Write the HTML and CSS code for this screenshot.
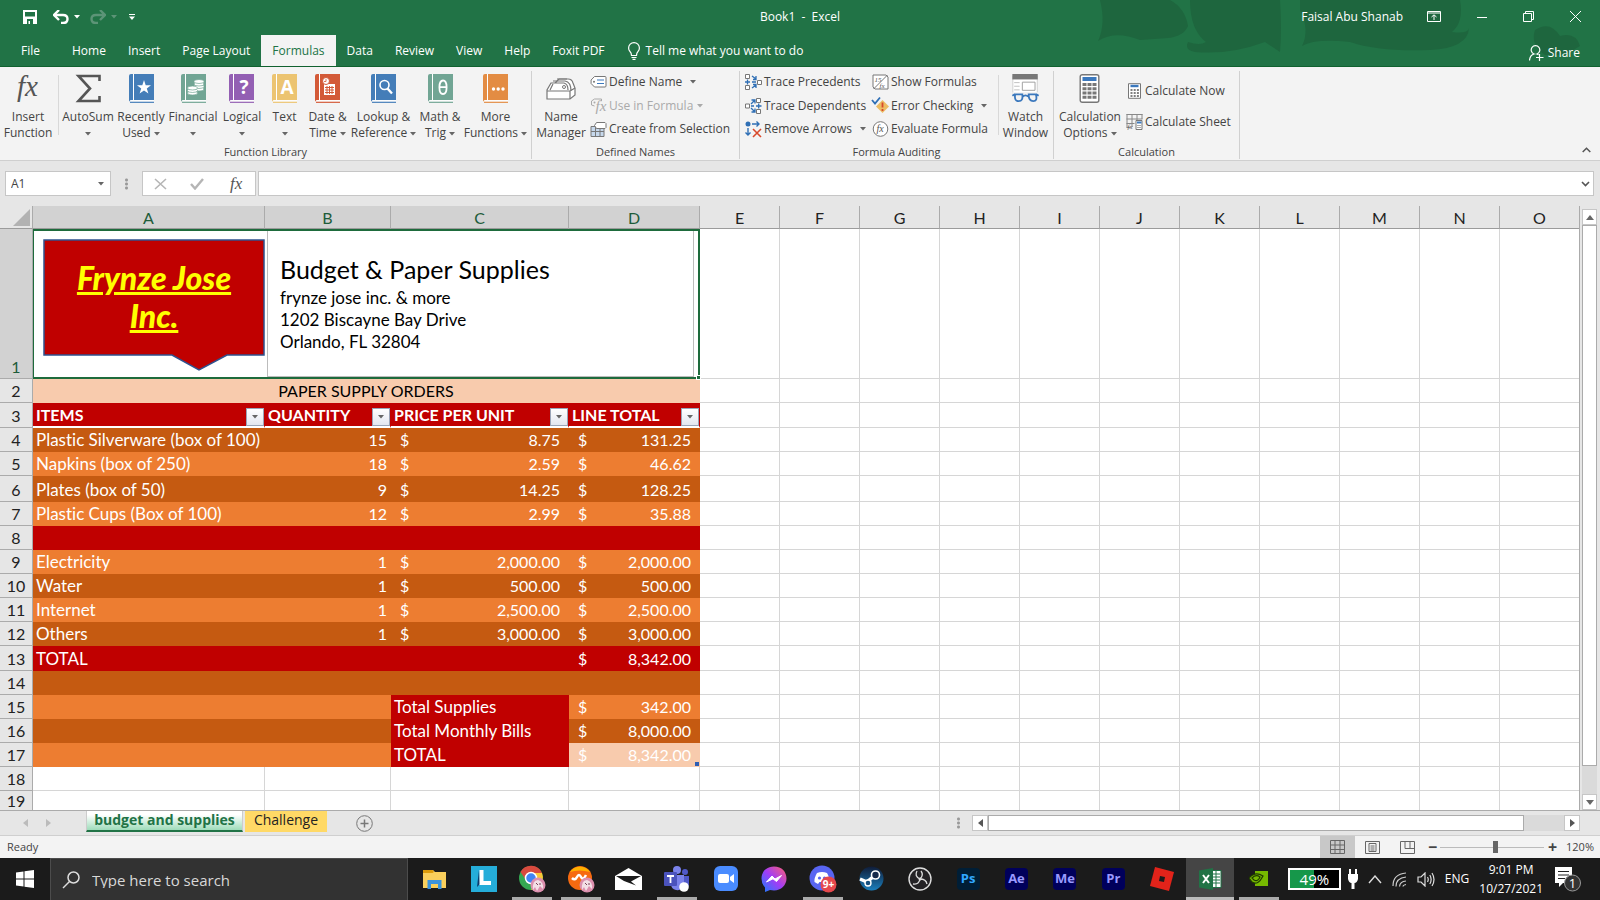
FILE: index.html
```html
<!DOCTYPE html>
<html lang="en">
<head>
    <meta charset="UTF-8">
    <meta name="viewport" content="width=device-width, initial-scale=1.0">
    <title>Book1 - Excel</title>
    <link rel="stylesheet" href="styles.css">
</head>
<body>
    <!-- shared icon shapes -->
    <svg class="defs" width="0" height="0" aria-hidden="true">
        <symbol id="book" viewBox="0 0 25 29">
            <path d="M2 0H25V26H2.500Q1 26 1 27.500Q0 27 0 26V2Q0 0 2 0Z" fill="currentColor"/>
            <path d="M4.500 0V26" stroke="#fff" stroke-width="1"/>
            <path d="M1 27H25" stroke="#fff" stroke-width="1.500"/>
            <path d="M1 28.300H25" stroke="currentColor" stroke-width="1.200"/>
        </symbol>
        <symbol id="caret" viewBox="0 0 6 4"><path d="M0 0H6L3 3.500Z" fill="currentColor"/></symbol>
        <symbol id="calc" viewBox="0 0 20 29">
            <rect x=".7" y=".7" width="18.600" height="27.600" rx="2" fill="#fff" stroke="#777" stroke-width="1.400"/>
            <rect x="3" y="3" width="14" height="4" fill="#3b78bd"/>
            <path d="M3 10.500H17M3 14.700H17M3 19H17M3 23.200H17" stroke="#777" stroke-width="3" stroke-dasharray="4 1"/>
        </symbol>
    </svg>

    <header class="titlebar">
        <svg class="backdrop" viewBox="0 0 520 55" aria-hidden="true">
            <g fill="#1e663e">
                <path d="M20 0H90Q105 8 108 26Q104 36 88 38L60 40Q35 30 18 41Q26 24 20 0Z"/>
                <path d="M110 0H200Q202 30 200 52L185 42Q150 55 115 52Q104 50 108 42Q120 46 126 42Q110 30 110 0Z"/>
                <path d="M220 0H380Q384 22 372 32Q388 34 389 28Q388 48 350 50Q300 52 270 42Q235 38 222 46Q230 30 220 10Z"/>
                <path d="M455 30Q470 20 480 36Q496 32 500 46L485 55H465Q450 45 455 30Z"/>
            </g>
        </svg>
        <div class="quick">
            <button aria-label="Save"><svg width="14" height="14" viewBox="0 0 14 14"><path d="M0 0H14V14H0ZM2 2V6.500H12V2ZM4 9V14H10V9Z" fill="#fff" fill-rule="evenodd"/><path d="M5.500 11H7V14H5.500Z" fill="#fff"/></svg></button>
            <button aria-label="Undo"><svg width="16" height="14" viewBox="0 0 16 14"><path d="M1 5H10Q14.500 5 14.500 9T10 13H8" fill="none" stroke="#fff" stroke-width="2.400"/><path d="M6 0L1 5L6 10" fill="none" stroke="#fff" stroke-width="2.400"/></svg></button>
            <button aria-label="Undo list"><svg width="6" height="4"><use href="#caret"/></svg></button>
            <button aria-label="Redo" class="dim redo"><svg width="16" height="14" viewBox="0 0 16 14"><path d="M15 5H6Q1.500 5 1.500 9T6 13H8M10 0L15 5L10 10" fill="none" stroke="currentColor" stroke-width="2.400"/></svg></button>
            <button aria-label="Redo list" class="dim"><svg width="6" height="4"><use href="#caret"/></svg></button>
            <button aria-label="Customize toolbar"><svg width="6" height="6" viewBox="0 0 6 6"><path d="M0 0H6V1H0ZM0 2.500H6L3 6Z" fill="#fff"/></svg></button>
        </div>
        <div class="doc-title">Book1&nbsp; -&nbsp; Excel</div>
        <div class="window-tools">
            <span>Faisal Abu Shanab</span>
            <button aria-label="Ribbon display options"><svg width="14" height="11" viewBox="0 0 14 11"><path d="M.5 .5H13.500V10.500H.5ZM.5 2H13.500M7 9V4M4.500 6L7 3.800L9.500 6" fill="none" stroke="#fff"/></svg></button>
            <button aria-label="Minimize"><svg width="10" height="10"><path d="M0 5.500H10" stroke="#fff"/></svg></button>
            <button aria-label="Restore"><svg width="11" height="11"><path d="M.5 2.500H8.500V10.500H.5ZM2.500 2.500V.5H10.500V8.500H8.500" fill="none" stroke="#fff"/></svg></button>
            <button aria-label="Close"><svg width="11" height="11"><path d="M0 0L11 11M11 0L0 11" stroke="#fff"/></svg></button>
        </div>
    </header>

    <nav class="tabs">
        <button class="file">File</button>
        <button>Home</button>
        <button>Insert</button>
        <button>Page Layout</button>
        <button class="active">Formulas</button>
        <button>Data</button>
        <button>Review</button>
        <button>View</button>
        <button>Help</button>
        <button>Foxit PDF</button>
        <button class="tell"><svg width="12" height="18" viewBox="0 0 12 18"><path d="M3.500 13.500Q3.500 11 2 9.500Q.6 8 .6 6A5.400 5.400 0 0 1 11.400 6Q11.400 8 10 9.500Q8.500 11 8.500 13.500ZM3.500 15.500H8.500M4.500 17.300H7.500" fill="none" stroke="#fff" stroke-width="1.200"/></svg>Tell me what you want to do</button>
        <button class="share"><svg width="15" height="16" viewBox="0 0 15 16"><path d="M.5 15.500Q1 10 5 9A4.300 4.300 0 1 1 8 9L9.500 9.700M10.500 9V16M7 12.500H14.500" fill="none" stroke="#fff" stroke-width="1.200"/></svg>Share</button>
    </nav>

    <section class="ribbon">
        <div class="group library">
            <div class="group-body">
                <button class="big"><svg width="25" height="29" viewBox="0 0 25 29"><text x="2" y="22" class="fx-text" font-size="29">fx</text></svg>Insert<br>Function</button>
                <i class="divider"></i>
                <button class="big"><svg width="25" height="29" viewBox="0 0 25 29"><path d="M23.500 7V2H2.500L14 14.500L2.500 27H23.500V22" fill="none" stroke="#555" stroke-width="2.600"/></svg>AutoSum<br><svg class="caret"><use href="#caret"/></svg></button>
                <button class="big"><svg class="blue" width="25" height="29" viewBox="0 0 25 29"><use href="#book"/><path d="M15 6L16.700 11.200H22L17.800 14.400L19.400 19.600L15 16.400L10.600 19.600L12.200 14.400L8 11.200H13.300Z" fill="#fff"/></svg>Recently<br>Used <svg class="caret"><use href="#caret"/></svg></button>
                <button class="big"><svg class="teal" width="25" height="29" viewBox="0 0 25 29"><use href="#book"/><g fill="#fff" stroke="#71a594" stroke-width=".7"><ellipse cx="18" cy="15" rx="5" ry="2"/><ellipse cx="18" cy="12.500" rx="5" ry="2"/><ellipse cx="18" cy="10" rx="5" ry="2"/><ellipse cx="18" cy="7.500" rx="5" ry="2"/><ellipse cx="11.500" cy="19" rx="5" ry="2"/><ellipse cx="11.500" cy="16.500" rx="5" ry="2"/><ellipse cx="11.500" cy="14" rx="5" ry="2"/></g></svg>Financial<br><svg class="caret"><use href="#caret"/></svg></button>
                <button class="big"><svg class="purple" width="25" height="29" viewBox="0 0 25 29"><use href="#book"/><text x="15" y="20" class="glyph" font-size="19">?</text></svg>Logical<br><svg class="caret"><use href="#caret"/></svg></button>
                <button class="big"><svg class="gold" width="25" height="29" viewBox="0 0 25 29"><use href="#book"/><text x="15" y="20" class="glyph" font-size="19">A</text></svg>Text<br><svg class="caret"><use href="#caret"/></svg></button>
                <button class="big"><svg class="red" width="25" height="29" viewBox="0 0 25 29"><use href="#book"/><rect x="9" y="10" width="11" height="11" fill="#fff"/><path d="M10 13.500H19M10 16H19M10 18.500H19M12 12V20M14.500 12V20M17 12V20" stroke="currentColor"/><circle cx="11" cy="7" r="3.500" fill="#fff" stroke="currentColor"/><path d="M11 5V7.500H9" fill="none" stroke="currentColor" stroke-width=".8"/></svg>Date &amp;<br>Time <svg class="caret"><use href="#caret"/></svg></button>
                <button class="big"><svg class="blue" width="25" height="29" viewBox="0 0 25 29"><use href="#book"/><circle cx="13.500" cy="11" r="4.500" fill="none" stroke="#fff" stroke-width="1.600"/><path d="M16.500 14.500L21 19.500" stroke="#fff" stroke-width="2.400"/></svg>Lookup &amp;<br>Reference <svg class="caret"><use href="#caret"/></svg></button>
                <button class="big"><svg class="teal" width="25" height="29" viewBox="0 0 25 29"><use href="#book"/><path d="M15 6.500C19.800 6.500 19.800 20 15 20S10.200 6.500 15 6.500ZM11.500 13.200H18.500" fill="none" stroke="#fff" stroke-width="1.800"/></svg>Math &amp;<br>Trig <svg class="caret"><use href="#caret"/></svg></button>
                <button class="big"><svg class="orange" width="25" height="29" viewBox="0 0 25 29"><use href="#book"/><g fill="#fff"><circle cx="10.500" cy="15" r="1.700"/><circle cx="15.200" cy="15" r="1.700"/><circle cx="20" cy="15" r="1.700"/></g></svg>More<br>Functions <svg class="caret"><use href="#caret"/></svg></button>
            </div>
            <div class="group-label">Function Library</div>
        </div>

        <div class="group names">
            <div class="group-body">
                <button class="big"><svg width="30" height="29" viewBox="0 0 30 29"><path d="M9 9L13 5H22Q26 5 27 9L29 14V21L24 25H1V16L5 9H18Q22 10 22 16" fill="#fff" stroke="#777" stroke-width="1.200"/><path d="M7 7H19Q25 8 25 17M11 5H21M1 17H24V25M24 17L29 14M4 16L7 10" fill="none" stroke="#777" stroke-width="1.200"/><circle cx="18" cy="13" r="1.500" fill="none" stroke="#777"/></svg>Name<br>Manager</button>
                <div class="stack">
                    <button><svg width="16" height="14" viewBox="0 0 16 14"><path d="M4 1.500H14.500Q15.500 1.500 15.500 2.500V11Q15.500 12 14.500 12H4L.6 8.500V5Z" fill="#fff" stroke="#777"/><circle cx="3.500" cy="6.700" r="1" fill="#777"/><path d="M6.500 5H13.500M6.500 8.500H13.500" stroke="#3b78bd"/></svg>Define Name <svg class="caret wide"><use href="#caret"/></svg></button>
                    <button class="off"><svg width="16" height="16" viewBox="0 0 16 16"><path d="M1 7V3L4 1H11V3M1 7L4 8" fill="none" stroke="#aaa"/><circle cx="4" cy="4.500" r="1" fill="#aaa"/><text x="5" y="13" class="fx-text light" font-size="15">fx</text></svg>Use in Formula<svg class="caret"><use href="#caret"/></svg></button>
                    <button><svg width="16" height="15" viewBox="0 0 16 15"><path d="M.5 4.500H13.500V14.500H.5ZM.5 9.500H13.500M5 4.500V14.500M9.500 4.500V14.500" fill="#c6d8ec" stroke="#777"/><path d="M6 .5H14.500L15.500 1.500V5.500L14.500 6.500H6L4 3.500Z" fill="#fff" stroke="#777"/></svg>Create from Selection</button>
                </div>
            </div>
            <div class="group-label">Defined Names</div>
        </div>

        <div class="group auditing">
            <div class="group-body">
                <div class="stack">
                    <button><svg width="17" height="16" viewBox="0 0 17 16"><path d="M.5 .5H4.500V4.500H.5ZM.5 11.500H4.500V15.500H.5ZM12.500 6.500H16.500V10.500H12.500Z" fill="#fff" stroke="#777"/><path d="M0 8H5M2.500 5.500V10.500M7 2L11 5M11 2V5.500H8M7 14L11 11M8 10.500H11V14M7 8H11" fill="none" stroke="#2f6fb5" stroke-width="1.300"/></svg>Trace Precedents</button>
                    <button><svg width="17" height="16" viewBox="0 0 17 16"><path d="M.5 6H4.500V10H.5ZM11.500 .5H15.500V4.500H11.500ZM11.500 11.500H15.500V15.500H11.500Z" fill="#fff" stroke="#777"/><path d="M11 8H16.500M13.700 5.500V10.500M6 6L9.500 2.500M6.500 2H10V5.500M6 10L9.500 13.500M6.500 14H10V10.500M6 8H9" fill="none" stroke="#2f6fb5" stroke-width="1.300"/></svg>Trace Dependents</button>
                    <button><svg width="17" height="17" viewBox="0 0 17 17"><circle cx="3" cy="3" r="2.500" fill="#2f6fb5"/><path d="M7 3H14M11.500 .5L14 3L11.500 5.500M3 7V14M.5 11.500L3 14L5.500 11.500" fill="none" stroke="#2f6fb5" stroke-width="1.400"/><path d="M8 8L16 16M16 8L8 16" stroke="#d8492b" stroke-width="1.600"/></svg>Remove Arrows <svg class="caret wide"><use href="#caret"/></svg></button>
                </div>
                <div class="stack">
                    <button><svg width="16" height="16" viewBox="0 0 16 16"><path d="M.5 1H13.500L15.500 3V15H2.500L.5 13ZM15 1L1 15" fill="#fff" stroke="#777"/><text x="2" y="8" class="tiny">15</text><text x="7" y="14" class="tiny">fx</text></svg>Show Formulas</button>
                    <button><svg width="17" height="17" viewBox="0 0 17 17"><path d="M10.500 3L17 9.500L10.500 16L4 9.500Z" fill="#ecbc63"/><path d="M10.500 5.500V10.500M10.500 12V14" stroke="#d8492b" stroke-width="1.800"/><path d="M0 3L3 6.500L8 .5" fill="none" stroke="#2f6fb5" stroke-width="1.800"/></svg>Error Checking <svg class="caret wide"><use href="#caret"/></svg></button>
                    <button><svg width="16" height="16" viewBox="0 0 16 16"><circle cx="8" cy="8" r="7.300" fill="#fff" stroke="#777"/><text x="4" y="11" class="fx-text" font-size="10">fx</text></svg>Evaluate Formula</button>
                </div>
                <i class="divider"></i>
                <button class="big"><svg width="31" height="32" viewBox="0 0 31 32"><path d="M1.500 2H28.500V22H1.500Z" fill="#fff" stroke="#ccc"/><path d="M1 0H29V6H1Z" fill="#777"/><path d="M12 9H26V18H12Z" fill="#fff" stroke="#999"/><path d="M3 9.500H9M3 13.500H9M3 17.500H9" stroke="#bbb"/><path d="M1 20H30V30H1Z" fill="#f3f3f3"/><path d="M4 22.500H13M18 22.500H27M1 24L4 22M30 24L27 22M4 23Q3 30 8 30T12 23M19 23Q19 30 24 30T27 23M12.500 25Q15.500 22 18.500 25" fill="none" stroke="#3b78bd" stroke-width="2"/></svg>Watch<br>Window</button>
            </div>
            <div class="group-label">Formula Auditing</div>
        </div>

        <div class="group calculation">
            <div class="group-body">
                <button class="big"><svg width="21" height="29"><use href="#calc"/></svg>Calculation<br>Options <svg class="caret"><use href="#caret"/></svg></button>
                <div class="stack two">
                    <button><svg width="15" height="16" viewBox="0 0 15 16"><path d="M1.500 .7H13.500V15.300H1.500Z" fill="#fff" stroke="#777"/><path d="M3.500 3H11.500" stroke="#3b78bd" stroke-width="2.400"/><path d="M3.500 7H12M3.500 10H12M3.500 13H12" stroke="#555" stroke-width="1.600" stroke-dasharray="2 1.200"/></svg>Calculate Now</button>
                    <button><svg width="16" height="16" viewBox="0 0 16 16"><path d="M.5 0V13.500M5.500 0V13M10.500 0V6M15.500 0V5M0 .5H16M0 5H16M0 9.500H8M0 13.500H4" stroke="#888" fill="none"/><text x="1" y="15" class="tiny">fx</text><path d="M9.500 6.500H15.500V15.500H9.500Z" fill="#fff" stroke="#777"/><path d="M10.500 8.500H15" stroke="#3b78bd" stroke-width="2"/><path d="M11 11.500H15M11 13.500H15" stroke="#555" stroke-dasharray="1 1"/></svg>Calculate Sheet</button>
                </div>
            </div>
            <div class="group-label">Calculation</div>
        </div>
        <button class="collapse" aria-label="Collapse ribbon"><svg width="9" height="6"><path d="M.7 5L4.500 1.200L8.300 5" fill="none" stroke="#555" stroke-width="1.500"/></svg></button>
    </section>

    <section class="formula-row">
        <label class="name-box"><input type="text" value="A1" aria-label="Name box"><svg class="caret"><use href="#caret"/></svg></label>
        <span class="grip"></span>
        <div class="entry-tools">
            <button aria-label="Cancel"><svg width="13" height="12"><path d="M1 1L12 11M12 1L1 11" stroke="#b5b5b5" stroke-width="1.600"/></svg></button>
            <button aria-label="Enter"><svg width="14" height="12"><path d="M1 6L5 10.500L13 1" fill="none" stroke="#b5b5b5" stroke-width="2.400"/></svg></button>
            <button aria-label="Insert function"><svg width="18" height="22"><text x="3" y="16" class="fx-text" font-size="17">fx</text></svg></button>
        </div>
        <label class="formula-input"><input type="text" aria-label="Formula bar"><svg width="9" height="6"><path d="M1 1L4.500 4.500L8 1" fill="none" stroke="#555" stroke-width="1.600"/></svg></label>
    </section>

    <main class="workspace">
        <div class="grid-area">
            <table class="sheet" id="sheet">
                <colgroup>
                    <col class="c-head"><col class="c-a"><col class="c-b"><col class="c-c"><col class="c-d">
                    <col span="11" class="c-rest">
                </colgroup>
                <thead><tr id="letters"><th class="corner"><svg width="17" height="17"><path d="M17 0V17H0Z" fill="#b2b2b2"/></svg></th></tr></thead>
                <tbody>
                    <tr class="banner" id="banner">
                        <th class="picked">1</th>
                        <td colspan="4" class="selected">
                            <div class="objects">
                                <div class="callout">
                                    <svg viewBox="0 0 222 132" preserveAspectRatio="none" aria-hidden="true"><path d="M1 1H221V116H184L156 131L129 116H1Z" fill="#c00000" stroke="#2f528f" stroke-width="1.500"/></svg>
                                    <p>Frynze Jose<br>Inc.</p>
                                </div>
                                <div class="textbox">
                                    <h1>Budget &amp; Paper Supplies</h1>
                                    <p>frynze jose inc. &amp; more<br>1202 Biscayne Bay Drive<br>Orlando, FL 32804</p>
                                </div>
                            </div>
                            <i class="handle"></i>
                        </td>
                    </tr>
                </tbody>
            </table>
        </div>
        <div class="vscroll">
            <button aria-label="Scroll up"><svg width="8" height="5"><path d="M0 5H8L4 0Z" fill="#666"/></svg></button>
            <div class="vtrack"><div class="vthumb"></div></div>
            <button aria-label="Scroll down"><svg width="8" height="5"><path d="M0 0H8L4 5Z" fill="#666"/></svg></button>
        </div>
    </main>

    <div class="sheet-bar">
        <div class="sheet-nav">
            <button aria-label="Previous sheet"><svg width="5" height="8"><path d="M5 0V8L0 4Z" fill="#bbb"/></svg></button>
            <button aria-label="Next sheet"><svg width="5" height="8"><path d="M0 0V8L5 4Z" fill="#bbb"/></svg></button>
        </div>
        <button class="sheet-tab current">budget and supplies</button>
        <button class="sheet-tab challenge">Challenge</button>
        <button class="add" aria-label="New sheet"><svg width="17" height="17"><circle cx="8.500" cy="8.500" r="7.800" fill="none" stroke="#777"/><path d="M4.500 8.500H12.500M8.500 4.500V12.500" stroke="#777" stroke-width="1.500"/></svg></button>
        <div class="hscroll">
            <span class="grip"></span>
            <button aria-label="Scroll left"><svg width="5" height="8"><path d="M5 0V8L0 4Z" fill="#555"/></svg></button>
            <div class="htrack"><div class="hthumb"></div></div>
            <button aria-label="Scroll right"><svg width="5" height="8"><path d="M0 0V8L5 4Z" fill="#555"/></svg></button>
        </div>
    </div>

    <footer class="status">
        <span>Ready</span>
        <div class="views">
            <button class="on" aria-label="Normal view"><svg width="15" height="14"><path d="M.5 .5H14.500V13.500H.5ZM.5 5H14.500M.5 9.500H14.500M5 .5V13.500M10 .5V13.500" fill="none" stroke="#666"/></svg></button>
            <button aria-label="Page layout view"><svg width="15" height="13"><path d="M.5 .5H14.500V12.500H.5ZM4 2.500H11V10.500H4ZM5.500 5H9.500M5.500 7H9.500M5.500 9H9.500" fill="none" stroke="#666"/></svg></button>
            <button aria-label="Page break view"><svg width="15" height="13"><path d="M.5 .5H14.500V12.500H.5ZM5 .5V7.500H10V.5M10 7.500H14" fill="none" stroke="#666"/></svg></button>
        </div>
        <label class="zoom"><span>−</span><input type="range" min="0" max="100" value="54" aria-label="Zoom"><span>+</span><output>120%</output></label>
    </footer>

    <div class="taskbar">
        <button class="start" aria-label="Start"><svg width="18" height="18" viewBox="0 0 18 18"><path d="M0 2.500L7.500 1.500V8.500H0ZM8.500 1.300L18 0V8.500H8.500ZM0 9.500H7.500V16.500L0 15.500ZM8.500 9.500H18V18L8.500 16.700Z" fill="#fff"/></svg></button>
        <label class="search"><svg width="18" height="18"><circle cx="11.500" cy="6.500" r="5.500" fill="none" stroke="#ddd" stroke-width="1.500"/><path d="M7.500 10.500L1 17" stroke="#ddd" stroke-width="1.500"/></svg><input type="text" placeholder="Type here to search" aria-label="Search"></label>
        <div class="apps">
            <button aria-label="File Explorer"><svg width="24" height="20" viewBox="0 0 24 20"><path d="M0 1H10L12 3H23V19H0Z" fill="#f9cf5c"/><path d="M0 1H9.500L11 3L9.500 4H0Z" fill="#dc9b0b"/><path d="M4.500 20V11H18.500V20H15V15H8V20Z" fill="#3a93dd"/></svg></button>
            <button aria-label="Lightshot"><svg width="26" height="26"><rect width="26" height="26" fill="#25add9"/><path d="M8 4L6 21L9 18" fill="#0b3a6b"/><path d="M8.500 4H12.500V15H20V19H8.500Z" fill="#fff"/></svg></button>
            <button class="open" aria-label="Chrome"><svg width="28" height="28" viewBox="0 0 28 28"><circle cx="13" cy="13" r="12" fill="#35a852"/><path d="M2.500 7A12 12 0 0 1 24 8H13L8 15Z" fill="#d94a3e"/><path d="M13 8H24Q27 16 20 23L13 25L18 15Z" fill="#fbc636"/><circle cx="13" cy="13" r="5.500" fill="#4285f4" stroke="#fff" stroke-width="1.500"/><circle cx="20" cy="20" r="7.500" fill="#dc8fae"/><path d="M15 25Q14 15 20 15Q26 17 25 24L22 21L19 26L17 22Z" fill="#f3dfe6"/><path d="M18 18L20 20M22 18V20" stroke="#7a4258" fill="none"/></svg></button>
            <button class="open" aria-label="Browser"><svg width="28" height="28" viewBox="0 0 28 28"><circle cx="13" cy="13" r="12" fill="#f66a10"/><path d="M3 7A12 12 0 0 1 23 7Q12 4 3 7Z" fill="#ffb100"/><path d="M5 13Q8 16 10 12T14 12T19 10" stroke="#fff" fill="none" stroke-width="2.500"/><circle cx="20" cy="20" r="7.500" fill="#dc8fae"/><path d="M15 25Q14 15 20 15Q26 17 25 24L22 21L19 26L17 22Z" fill="#f3dfe6"/><path d="M18 18L20 20M22 18V20" stroke="#7a4258" fill="none"/></svg></button>
            <button aria-label="Mail"><svg width="27" height="22"><path d="M0 8L13.500 0L27 8V22H0Z" fill="#fff"/><path d="M1 8H26L16 13.500L21 17.500L9 13Z" fill="#1b1b1b"/></svg></button>
            <button class="open" aria-label="Teams"><svg width="26" height="26" viewBox="0 0 26 26"><circle cx="13" cy="4" r="4" fill="#7b83eb"/><circle cx="21" cy="6" r="3" fill="#5059c9"/><path d="M17 10H25V18Q25 23 18 22Z" fill="#5059c9"/><path d="M7 9H20V18Q19 25 12 24Q7 23 7 18Z" fill="#7b83eb"/><rect y="6" width="13" height="14" rx="1" fill="#4b53bc"/><path d="M3 10H10M6.500 10V17" stroke="#fff" stroke-width="1.800"/><circle cx="20" cy="21" r="4.800" fill="#fff"/></svg></button>
            <button aria-label="Zoom"><svg width="24" height="25"><rect width="24" height="25" rx="6" fill="#4a8cff"/><rect x="4" y="8" width="11" height="9" rx="2" fill="#fff"/><path d="M16 11L20 8V17L16 14Z" fill="#fff"/></svg></button>
            <button aria-label="Messenger"><svg width="26" height="26" viewBox="0 0 26 26"><defs><linearGradient id="msg" x1="0" y1="1" x2="1" y2="0"><stop offset="0" stop-color="#1681ff"/><stop offset=".5" stop-color="#a23cf5"/><stop offset="1" stop-color="#ff5f70"/></linearGradient></defs><path d="M13 .5C21 .5 25.500 6 25.500 12.500S20 24.500 13 24.500L9 24L4 26V21.500Q.5 18 .5 12.500C.5 6 5 .5 13 .5Z" fill="url(#msg)"/><path d="M5.500 16L11 10L14 13L20.500 9.500L15.500 15.500L12 12.800Z" fill="#fff" stroke="#fff"/></svg></button>
            <button class="open" aria-label="Discord"><svg width="28" height="28" viewBox="0 0 28 28"><circle cx="13" cy="13" r="12.500" fill="#5865f2"/><path d="M8 8Q13 6 18 8Q21 13 20.500 17L17 19L15.500 17H10.500L9 19L5.500 17Q5 13 8 8Z" fill="#fff"/><circle cx="10.500" cy="13" r="1.600" fill="#5865f2"/><circle cx="15.500" cy="13" r="1.600" fill="#5865f2"/><circle cx="19.500" cy="19.500" r="8" fill="#e5484d"/><text x="19.500" y="23" class="glyph" font-size="10">9+</text></svg></button>
            <button aria-label="Steam"><svg width="25" height="25" viewBox="0 0 25 25"><defs><linearGradient id="stm" x1="0" y1="0" x2="0" y2="1"><stop offset="0" stop-color="#101c38"/><stop offset="1" stop-color="#1b7fbd"/></linearGradient></defs><circle cx="12.500" cy="12.500" r="12" fill="url(#stm)"/><path d="M1 13L8 16L15 10" fill="none" stroke="#fff" stroke-width="3.500"/><circle cx="16.500" cy="9" r="4" fill="#15294a" stroke="#fff" stroke-width="1.600"/><circle cx="9" cy="17" r="3" fill="#15507f" stroke="#fff" stroke-width="1.400"/></svg></button>
            <button aria-label="OBS"><svg width="24" height="24" viewBox="0 0 24 24"><circle cx="12" cy="12" r="11" fill="#242225" stroke="#ddd" stroke-width="1.400"/><path d="M9 4Q6 9 12 12Q18 12 19 17M12 12Q11 18 5 17M12 12Q16 8 13 4" fill="none" stroke="#ddd" stroke-width="1.300"/><circle cx="12" cy="12" r="1.500" fill="#ddd"/></svg></button>
            <button aria-label="Photoshop"><span class="adobe ps">Ps</span></button>
            <button aria-label="After Effects"><span class="adobe">Ae</span></button>
            <button aria-label="Media Encoder"><span class="adobe">Me</span></button>
            <button aria-label="Premiere"><span class="adobe">Pr</span></button>
            <button aria-label="Roblox"><svg width="24" height="24"><path d="M5 0L24 5L19 24L0 19Z" fill="#e2231a"/><path d="M10 9L15 10L14 15L9 14Z" fill="#1b1b1b"/></svg></button>
            <button class="open focused" aria-label="Excel"><svg width="23" height="22" viewBox="0 0 23 22"><path d="M12 2.500H22V19.500H12Z" fill="#fff" stroke="#217346"/><path d="M13 6H21M13 9H21M13 12H21M13 15H21M17 3V19" stroke="#217346"/><path d="M0 2.500L14 0V22L0 19.500Z" fill="#217346"/><path d="M4 7L10 15M10 7L4 15" stroke="#fff" stroke-width="2"/></svg></button>
            <button class="open" aria-label="NVIDIA"><svg width="20" height="15"><path d="M6 0H19V15H6Z" fill="#76b900"/><path d="M0 7Q6 0 14 5Q9 15 3 11ZM3 7Q7 3 11 6Q9 11 5 9Z" fill="#76b900" stroke="#1f3b00" stroke-width="1.200"/></svg></button>
        </div>
        <div class="tray">
            <span class="battery">49%</span>
            <svg width="10" height="20"><path d="M2 0V6M8 0V6" stroke="#fff" stroke-width="2"/><path d="M0 5H10V10Q9 14 6.500 14V20H3.500V14Q1 14 0 10Z" fill="#fff"/></svg>
            <svg width="14" height="9"><path d="M1 8L7 1L13 8" fill="none" stroke="#ddd" stroke-width="1.400"/></svg>
            <svg width="15" height="15"><path d="M1 14Q1 2 14 1M4 14.500Q4 6 14 5M7.500 14.500Q8 9.500 14 9M11 14.500Q11 13 14 12.500" fill="none" stroke="#ccc" stroke-width="1.200"/></svg>
            <svg width="18" height="15"><path d="M1 5H4L8 1V14L4 10H1ZM10.500 5Q12 7.500 10.500 10M12.800 3Q15.500 7.500 12.800 12M15 1Q19 7.500 15 14" fill="none" stroke="#ddd" stroke-width="1.200"/></svg>
            <span>ENG</span>
            <time>9:01 PM<br>10/27/2021</time>
            <button aria-label="Notifications"><svg width="27" height="26" viewBox="0 0 27 26"><path d="M0 1H17V17H8L4 21V17H0Z" fill="#fff"/><path d="M3 5.500H14M3 9H14M3 12.500H10" stroke="#222"/><circle cx="17.500" cy="17" r="8" fill="#333" stroke="#999"/><text x="17.500" y="22" class="glyph plain" font-size="13">1</text></svg></button>
        </div>
    </div>

    <script src="script.js"></script>
</body>
</html>
```

FILE: styles.css
```css
* { box-sizing: border-box; }
body { margin: 0; height: 100vh; display: flex; flex-direction: column; overflow: hidden; background: #e6e6e6; font: 12px/16px "Open Sans", "Noto Sans", sans-serif; color: #444; }
button { border: 0; padding: 0; margin: 0; background: none; font: inherit; color: inherit; white-space: nowrap; }
input { border: 0; padding: 0; margin: 0; background: none; font: inherit; color: inherit; min-width: 0; outline: 0; }
p, h1 { margin: 0; font-weight: normal; }
svg { flex: none; }
.defs { position: absolute; }
.fx-text { font-family: "Liberation Serif", serif; font-style: italic; fill: #555; }
.fx-text.light { fill: #aaa; }
.glyph { font-family: "Open Sans", sans-serif; font-weight: bold; fill: #fff; text-anchor: middle; }
.glyph.plain { font-weight: normal; }
.tiny { font: italic 7px "Liberation Serif", serif; fill: #555; }
.caret { width: 6px; height: 4px; color: #666; vertical-align: middle; }

/* title bar */
.titlebar { position: relative; flex: none; height: 35px; display: grid; grid-template-columns: 1fr auto 1fr; align-items: center; background: #217346; color: #fff; padding-bottom: 2px; }
.backdrop { position: absolute; right: 0; top: 0; width: 520px; height: 55px; }
.quick { display: flex; align-items: center; padding-left: 23px; gap: 5px; }
.quick button { display: flex; color: #fff; }
.quick button:nth-child(2) { margin-left: 11px; }
.quick .redo { margin-left: 5px; }
.quick button:nth-child(6) { margin-left: 7px; }
.quick button.dim { color: #5c9477; }
.window-tools { position: relative; display: flex; justify-content: flex-end; align-items: center; padding-right: 19px; gap: 36px; }
.window-tools span { margin-right: -12px; }
.window-tools button { display: flex; }

/* ribbon tabs */
.tabs { position: relative; flex: none; height: 32px; display: flex; color: #fff; border-bottom: 1px solid #10612f; }
.tabs::before { content: ""; position: absolute; z-index: -1; inset: 0; background: #217346; }
.tabs button { padding: 1px 11px 0; font-size: 12px; }
.tabs .file { width: 61px; }
.tabs .active { background: #f3f3f3; color: #217346; }
.tabs .tell { display: flex; align-items: center; gap: 6px; padding-left: 12px; }
.tabs .share { display: flex; align-items: center; gap: 4px; margin-left: auto; padding: 4px 20px 0 0; }

/* ribbon */
.ribbon { position: relative; flex: none; height: 94px; display: flex; background: #f3f3f3; border-bottom: 1px solid #cfcfcf; padding: 4px 0 1px; }
.group { display: flex; flex-direction: column; justify-content: space-between; border-right: 1px solid #d0d0d0; }
.group-label { text-align: center; font-size: 11px; line-height: 15px; }
.group-body { display: grid; height: 68px; }
.library { width: 532px; }
.library .group-body { grid-template-columns: 56px 5px 54px 52px 52px 46px 39px 47px 65px 48px 63px; }
.names { width: 208px; }
.names .group-body { grid-template-columns: 58px 1fr; }
.auditing { width: 314px; }
.auditing .group-body { grid-template-columns: 127px 124px 4px 1fr; padding: 0 2px 0 5px; }
.calculation { width: 186px; }
.calculation .group-body { grid-template-columns: 72px 1fr; }
.divider { width: 1px; height: 60px; margin: 4px auto 0; background: #d8d8d8; }
.big { display: block; text-align: center; padding-top: 3px; justify-self: center; }
.big > svg:first-child { display: block; margin: 0 auto 6px; height: 29px; overflow: visible; }
.stack { display: flex; flex-direction: column; justify-content: space-between; align-items: flex-start; height: 65px; margin-top: 2px; }
.stack.two { padding: 9px 0 7px; }
.stack button { display: flex; align-items: center; height: 18px; }
.stack button > svg:first-child { width: 17px; margin-right: 2px; overflow: visible; }
.stack .caret { margin-left: 4px; }
.stack .caret.wide { margin-left: 8px; }
.stack .off, .off .caret { color: #aaa; }
.blue { color: #447db8; }
.teal { color: #71a594; }
.purple { color: #935fb3; }
.gold { color: #ecc471; }
.red { color: #d35a38; }
.orange { color: #e38c43; }
.collapse { margin-left: auto; align-self: flex-end; padding: 0 9px 2px 0; }

/* formula bar */
.formula-row { flex: none; height: 45px; display: flex; padding: 10px 6px 10px 5px; }
.name-box { width: 106px; display: flex; align-items: center; background: #fff; border: 1px solid #c6c6c6; padding: 0 6px 0 5px; }
.name-box input { flex: 1; }
.grip { width: 3px; height: 12px; margin: auto 14px; background: radial-gradient(circle, #999 1px, transparent 2px) 0 0 / 3px 4px; }
.entry-tools { width: 114px; display: flex; align-items: center; justify-content: space-between; background: #fff; border: 1px solid #c6c6c6; margin-right: 2px; padding: 0 10px 0 11px; }
.entry-tools button { display: flex; }
.formula-input { flex: 1; display: flex; align-items: center; background: #fff; border: 1px solid #c6c6c6; padding-right: 3px; }
.formula-input input { flex: 1; }

/* grid */
.workspace { flex: 1; min-height: 0; display: flex; border-bottom: 1px solid #ababab; }
.grid-area { flex: 1; overflow: hidden; background: #fff; border-right: 1px solid #ababab; }
.sheet { table-layout: fixed; width: 1580px; border-collapse: separate; border-spacing: 0; font: 16px/22px Lato, sans-serif; font-variant-ligatures: none; color: #000; }
.c-head { width: 33px; }
.c-a { width: 232px; }
.c-b { width: 126px; }
.c-c { width: 178px; }
.c-d { width: 131px; }
.c-rest { width: 80px; }
.sheet th { font-weight: normal; color: #222; background: #e6e6e6; border: 0 solid #ababab; border-width: 0 1px 1px 0; padding: 0; vertical-align: bottom; }
.sheet thead th { height: 23px; line-height: 20px; border-bottom-color: #9b9b9b; }
.sheet thead .corner { text-align: right; padding-right: 2px; line-height: 0; padding-bottom: 2px; }
.sheet th.picked { background: #d2d2d2; color: #1d5c3a; }
.sheet td { padding: 0 3px; border: 0 solid #d6d6d6; border-width: 0 1px 1px 0; white-space: nowrap; vertical-align: bottom; }
.sheet td.red-cell { background: #c00000; }
.sheet td.dark { background: #c55a11; }
.sheet td.light { background: #ed7d31; }
.sheet td.pale { background: #f8cbad; }
.sheet td.fill { border-color: transparent; color: #fff; }
.sheet .peach td.fill { background: #f8cbad; color: #000; text-align: center; }
.sheet td.num { text-align: right; }
.sheet td.label { font-size: 17px; }
.sheet .last th { line-height: 19px; vertical-align: top; }
.money { display: flex; justify-content: space-between; padding: 0 5px 0 6px; }
.sheet td.field { border-bottom: 2px solid #fff; padding-right: 0; font-weight: bold; }
.field div { display: flex; justify-content: space-between; align-items: flex-end; }
.field button { width: 18px; height: 18px; background: linear-gradient(#fff, #e3e7f0); border: 1px solid #9aa5b8; display: grid; place-items: center; }
.sheet .banner td { height: 150px; padding: 0; }
.sheet .banner td.selected { position: relative; border: 2px solid #1e6b3c; border-left-width: 1px; vertical-align: top; }
.objects { display: flex; height: 146px; }
.callout { position: relative; width: 222px; height: 132px; margin: 8px 2px 0 9px; }
.callout svg { position: absolute; inset: 0; width: 100%; height: 100%; }
.callout p { position: relative; padding-top: 20px; text-align: center; font: italic 900 32px/38px Lato, cursive; color: #ff0; text-decoration: underline; text-decoration-thickness: 3px; }
.textbox { flex: 1; margin: 0 4px 0 0; border: 1px solid #bcbcbc; border-top: 0; padding: 20px 12px 0; font-size: 17px; line-height: 22px; }
.textbox h1 { font-size: 25px; line-height: 36px; }
.handle { position: absolute; right: -3px; bottom: -3px; width: 5px; height: 5px; background: #1e6b3c; border: 1px solid #fff; }
.table-end { position: relative; }
.table-end::after { content: ""; position: absolute; right: 0; bottom: 0; width: 4px; height: 4px; background: #2f5fb3; }

/* scroll bars */
.vscroll { width: 20px; display: flex; flex-direction: column; padding: 3px 3px 0 2px; }
.vscroll button { height: 16px; display: grid; place-items: center; background: #fff; border: 1px solid #c6c6c6; }
.vtrack { flex: 1; background: #dadada; }
.vthumb { height: 95%; background: #fff; border: 1px solid #ababab; }

/* sheet tabs */
.sheet-bar { flex: none; height: 24px; display: flex; background: #e6e6e6; font-size: 14px; }
.sheet-nav { width: 86px; display: flex; align-items: center; gap: 18px; padding-left: 23px; }
.sheet-nav button { display: flex; }
.sheet-tab { height: 21px; line-height: 18px; color: #222; padding-bottom: 3px; }
.sheet-tab.current { width: 157px; font-weight: bold; color: #217346; background: linear-gradient(#fff 20%, #9edcba); border: 1px solid #ccc; border-top: 0; border-bottom: 2px solid #217346; padding-bottom: 1px; }
.sheet-tab.challenge { width: 82px; background: #ffd966; margin: 0 2px; }
.add { margin-left: 27px; display: flex; align-items: center; }
.hscroll { flex: 0 0 640px; margin-left: auto; display: flex; align-items: center; padding-right: 20px; }
.hscroll button { width: 16px; height: 16px; display: grid; place-items: center; background: #fff; border: 1px solid #c6c6c6; }
.hscroll .grip { margin: 0 12px 0 auto; }
.htrack { flex: 0 0 576px; height: 16px; background: #dadada; }
.hthumb { width: 93%; height: 16px; background: #fff; border: 1px solid #ababab; }

/* status bar */
.status { flex: none; height: 23px; display: flex; align-items: center; background: #f3f3f3; border-top: 1px solid #cfcfcf; font-size: 11px; padding: 0 6px 0 7px; }
.views { display: flex; height: 100%; margin-left: auto; }
.views button { width: 35px; display: grid; place-items: center; }
.views .on { background: #c8c8c8; }
.zoom { display: flex; align-items: center; gap: 4px; margin-left: 3px; }
.zoom span { font-size: 16px; font-weight: bold; width: 8px; text-align: center; }
.zoom input { appearance: none; width: 104px; height: 12px; background: linear-gradient(#bbb, #bbb) center / 100% 1px no-repeat; }
.zoom input::-webkit-slider-thumb { appearance: none; width: 5px; height: 12px; background: #666; }
.zoom output { margin-left: 6px; }

/* taskbar */
.taskbar { flex: none; height: 42px; display: flex; align-items: stretch; background: #1b1b1b; color: #fff; }
.start { width: 50px; display: grid; place-items: center; }
.search { width: 358px; display: flex; align-items: center; gap: 12px; background: #323232; border: 1px solid #4c4c4c; border-bottom: 0; padding-left: 11px; font-size: 15px; }
.search input { flex: 1; }
.search input::placeholder { color: #d8d8d8; opacity: 1; }
.apps { flex: 1; display: flex; padding: 0 5px 0 3px; }
.apps button { flex: 1; display: grid; place-items: center; border: solid transparent; border-width: 2px 0 3px; }
.apps .open { background: linear-gradient(#aaa, #aaa) bottom / 40px 3px no-repeat border-box; }
.apps .open.focused { background: linear-gradient(#bbb, #bbb) bottom / 100% 3px no-repeat border-box, #454545; }
.adobe { width: 23px; height: 22px; border-radius: 4px; background: #00005b; color: #9999ff; font-weight: bold; font-size: 13px; line-height: 21px; }
.adobe.ps { background: #001e36; color: #31a8ff; }
.tray { display: flex; align-items: center; gap: 10px; padding-right: 18px; font-size: 12px; }
.battery { width: 53px; height: 22px; border: 2px solid #fff; background: linear-gradient(90deg, #16974a 49%, #000 49%); text-align: center; font-size: 15px; line-height: 18px; margin-right: -3px; }
.tray time { text-align: center; line-height: 19px; }
.tray button { display: flex; margin-left: 2px; }
```

FILE: script.js
```js
// each row: height, fill class, cells A-D
const D = 'dark', L = 'light', R = 'red-cell';
const rows = [
    [24, D, 'Plastic Silverware (box of 100)', '15', '8.75', '131.25'],
    [24, L, 'Napkins (box of 250)', '18', '2.59', '46.62'],
    [26, D, 'Plates (box of 50)', '9', '14.25', '128.25'],
    [24, L, 'Plastic Cups (Box of 100)', '12', '2.99', '35.88'],
    [24, R, '', '', '', ''],
    [24, L, 'Electricity', '1', '2,000.00', '2,000.00'],
    [24, D, 'Water', '1', '500.00', '500.00'],
    [24, L, 'Internet', '1', '2,500.00', '2,500.00'],
    [24, D, 'Others', '1', '3,000.00', '3,000.00'],
    [25, R, 'TOTAL', '', '', '8,342.00'],
    [24, D, '', '', '', ''],
    [24, L, '', '', 'Total Supplies', '342.00'],
    [24, D, '', '', 'Total Monthly Bills', '8,000.00'],
    [24, L, '', '', 'TOTAL', '8,342.00'],
    [24, ''],
    [19, '']
];
const empty = '<td></td>'.repeat(11);
const money = v => v ? `<div class="money"><span>$</span><span>${v}</span></div>` : '';

document.getElementById('letters').innerHTML += 'ABCDEFGHIJKLMNO'.split('')
    .map((c, i) => `<th class="${i < 4 ? 'picked' : ''}">${c}</th>`).join('');
document.getElementById('banner').innerHTML += empty;

let html = `<tr class="peach" style="height:24px"><th>2</th><td class="fill" colspan="4">PAPER SUPPLY ORDERS</td>${empty}</tr>`;
html += '<tr style="height:25px"><th>3</th>';
for (const name of ['ITEMS', 'QUANTITY', 'PRICE PER UNIT', 'LINE TOTAL']) {
    html += `<td class="fill red-cell field"><div>${name}<button aria-label="Filter ${name}"><svg class="caret"><use href="#caret"/></svg></button></div></td>`;
}
html += empty + '</tr>';

rows.forEach(([height, fill, a, b, c, d], i) => {
    const n = i + 4;
    html += `<tr class="${n === 19 ? 'last' : ''}" style="height:${height}px"><th>${n}</th>`;
    if (!fill) {
        html += '<td></td>'.repeat(4);
    } else {
        const summary = n >= 15;
        html += `<td class="fill label ${fill}">${a}</td><td class="fill num ${fill}">${b}</td>`;
        html += summary ? `<td class="fill label ${R}">${c}</td>` : `<td class="fill ${fill}">${money(c)}</td>`;
        html += `<td class="fill ${n === 17 ? 'pale table-end' : fill}">${money(d)}</td>`;
    }
    html += empty + '</tr>';
});
document.querySelector('#sheet tbody').insertAdjacentHTML('beforeend', html);
```
